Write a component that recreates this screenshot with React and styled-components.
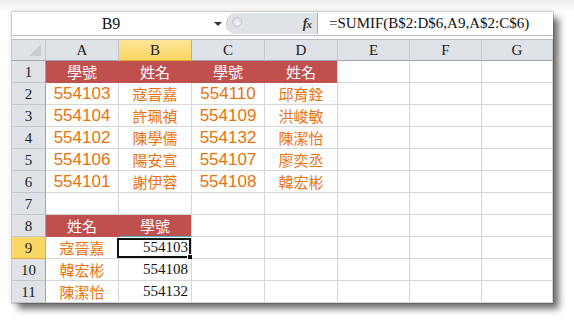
import React from "react";
import styled, { createGlobalStyle } from "styled-components";

const Global = createGlobalStyle`
  html, body { margin: 0; padding: 0; background: #ffffff; }
  body { width: 574px; height: 324px; overflow: hidden; font-family: "Liberation Sans", "Noto Sans CJK TC", sans-serif; }
  * { box-sizing: border-box; }
`;

const Stage = styled.div`
  padding: 12px 0 0 12px;
  background: linear-gradient(#ececec, #ffffff 12px);
  height: 324px;
`;

const Window = styled.div`
  width: 541px;
  height: 291px;
  background: #ffffff;
  box-shadow: 0 0 0 1px rgba(0,0,0,0.12), 0 0 5px rgba(0,0,0,0.18), 6px 6px 7px rgba(0,0,0,0.55);
  display: flex;
  flex-direction: column;
`;

const FormulaBar = styled.div`
  height: 24px;
  display: flex;
  border-bottom: 1px solid #b9bec6;
  flex: none;
`;

const NameBox = styled.div`
  width: 198px;
  display: flex;
  align-items: center;
  justify-content: center;
  font-family: "Liberation Serif", serif;
  font-size: 16px;
  color: #111;
`;

const ArrowBox = styled.div`
  width: 16px;
  display: flex;
  align-items: center;
  justify-content: center;
  &::after {
    content: "";
    border-left: 4px solid transparent;
    border-right: 4px solid transparent;
    border-top: 4px solid #333;
    margin-top: 1px;
  }
`;

const Splitter = styled.div`
  width: 92px;
  margin: 1px 0;
  background: #dfe2e7;
  border-radius: 11px 0 0 11px;
  border-left: 1px solid #c6cad0;
  display: flex;
  align-items: center;
  justify-content: space-between;
  padding: 0 6px 0 5px;
  border-right: 1px solid #a8adb5;
`;

const Knob = styled.div`
  width: 10px;
  height: 10px;
  border-radius: 50%;
  background: radial-gradient(circle at 60% 60%, #f4f5f7, #d2d6dc);
  border: 1px solid #c5c9cf;
  margin-top: -3px;
`;

const Fx = styled.div`
  font-family: "Liberation Serif", serif;
  font-style: italic;
  font-weight: bold;
  font-size: 14px;
  color: #333;
  letter-spacing: -1px;
  & > span { font-size: 11px; }
`;

const FormulaInput = styled.div`
  flex: 1;
  display: flex;
  align-items: center;
  padding-left: 11px;
  font-family: "Liberation Serif", serif;
  font-size: 15px;
  color: #111;
`;

const Gap = styled.div`
  height: 3px;
  flex: none;
`;

const Sheet = styled.div`
  display: grid;
  grid-template-columns: 34px 73px 73px 73px 73px 72px 72px 71px;
  grid-auto-rows: 22px;
`;

const Corner = styled.div`
  background: #dfe3e8;
  border-right: 1px solid #c3c8cf;
  border-bottom: 1px solid #9ea4ac;
  border-top: 1px solid #b9bec6;
  position: relative;
  &::after {
    content: "";
    position: absolute;
    right: 4px;
    bottom: 4px;
    border-left: 12px solid transparent;
    border-bottom: 12px solid #c9cdd3;
  }
`;

const ColHead = styled.div`
  background: ${(p) => (p.$sel ? "linear-gradient(#fde59a, #f9d660)" : "#dfe3e8")};
  border-right: 1px solid ${(p) => (p.$sel ? "#e5ab3a" : "#c3c8cf")};
  border-bottom: 1px solid ${(p) => (p.$sel ? "#e5ab3a" : "#9ea4ac")};
  border-top: 1px solid #b9bec6;
  display: flex;
  align-items: center;
  justify-content: center;
  font-family: "Liberation Serif", serif;
  font-size: 15px;
  color: #222;
  padding-top: 1px;
`;

const RowHead = styled.div`
  background: ${(p) => (p.$sel ? "#fbd765" : "#dfe3e8")};
  border-right: 1px solid ${(p) => (p.$sel ? "#e5ab3a" : "#9ea4ac")};
  border-bottom: 1px solid ${(p) => (p.$sel ? "#e5ab3a" : "#c3c8cf")};
  display: flex;
  align-items: center;
  justify-content: center;
  font-family: "Liberation Serif", serif;
  font-size: 15px;
  color: #222;
  padding-top: 2px;
`;

const Cell = styled.div`
  position: relative;
  background: ${(p) => (p.$head ? "#c0504d" : "#ffffff")};
  border-right: 1px solid ${(p) => (p.$head && !p.$last ? "#c0504d" : "#d6d6d6")};
  border-bottom: 1px solid ${(p) => (p.$teal ? "#4bacc6" : p.$head ? "#c0504d" : "#d6d6d6")};
  display: flex;
  align-items: ${(p) => (p.$num ? "flex-end" : "center")};
  justify-content: ${(p) => (p.$num ? "flex-end" : "center")};
  padding: ${(p) => (p.$num ? "0 3px 2px 0" : "0")};
  color: ${(p) => (p.$head ? "#ffffff" : p.$num ? "#111" : "#e8730f")};
  font-family: ${(p) => (p.$num ? '"Liberation Serif", serif' : '"Liberation Sans", "Noto Sans CJK TC", sans-serif')};
  font-size: ${(p) => (p.$num ? "15px" : p.$cjk ? "15px" : "17px")};
`;

const Selection = styled.div`
  position: absolute;
  left: -2px;
  top: 1px;
  right: 0;
  bottom: 0;
  border: 2px solid #111;
  pointer-events: none;
`;

const FillHandle = styled.div`
  position: absolute;
  right: -4px;
  bottom: -4px;
  width: 6px;
  height: 6px;
  background: #111;
  border: 1px solid #fff;
`;

const cols = ["A", "B", "C", "D", "E", "F", "G"];

const top = [
  ["554103", "寇晉嘉", "554110", "邱育銓"],
  ["554104", "許珮禎", "554109", "洪峻敏"],
  ["554102", "陳學儒", "554132", "陳潔怡"],
  ["554106", "陽安宣", "554107", "廖奕丞"],
  ["554101", "謝伊蓉", "554108", "韓宏彬"],
];

const lookup = [
  ["寇晉嘉", "554103"],
  ["韓宏彬", "554108"],
  ["陳潔怡", "554132"],
];

const isCjk = (s) => /[\u4e00-\u9fff]/.test(s);

function renderRow(r) {
  const cells = [];
  for (let c = 0; c < 7; c++) {
    const key = `${r}-${c}`;
    if (r === 1 && c < 4) {
      cells.push(
        <Cell key={key} $head $cjk $last={c === 3}>
          {c % 2 === 0 ? "學號" : "姓名"}
        </Cell>
      );
    } else if (r >= 2 && r <= 6 && c < 4) {
      const v = top[r - 2][c];
      cells.push(
        <Cell key={key} $cjk={isCjk(v)}>
          {v}
        </Cell>
      );
    } else if (r === 8 && c < 2) {
      cells.push(
        <Cell key={key} $head $cjk $last={c === 1} $teal={c === 1}>
          {c === 0 ? "姓名" : "學號"}
        </Cell>
      );
    } else if (r >= 9 && c < 2) {
      const v = lookup[r - 9][c];
      cells.push(
        <Cell key={key} $cjk={c === 0} $num={c === 1}>
          {v}
          {r === 9 && c === 1 && (
            <Selection>
              <FillHandle />
            </Selection>
          )}
        </Cell>
      );
    } else {
      cells.push(<Cell key={key} />);
    }
  }
  return cells;
}

export default function App() {
  const rows = [];
  for (let r = 1; r <= 11; r++) {
    rows.push(
      <RowHead key={`h${r}`} $sel={r === 9}>
        {r}
      </RowHead>
    );
    rows.push(...renderRow(r));
  }
  return (
    <>
      <Global />
      <Stage>
        <Window>
          <FormulaBar>
            <NameBox>B9</NameBox>
            <ArrowBox />
            <Splitter>
              <Knob />
              <Fx>
                f<span>x</span>
              </Fx>
            </Splitter>
            <FormulaInput>=SUMIF(B$2:D$6,A9,A$2:C$6)</FormulaInput>
          </FormulaBar>
          <Gap />
          <Sheet>
            <Corner />
            {cols.map((c) => (
              <ColHead key={c} $sel={c === "B"}>
                {c}
              </ColHead>
            ))}
            {rows}
          </Sheet>
        </Window>
      </Stage>
    </>
  );
}
